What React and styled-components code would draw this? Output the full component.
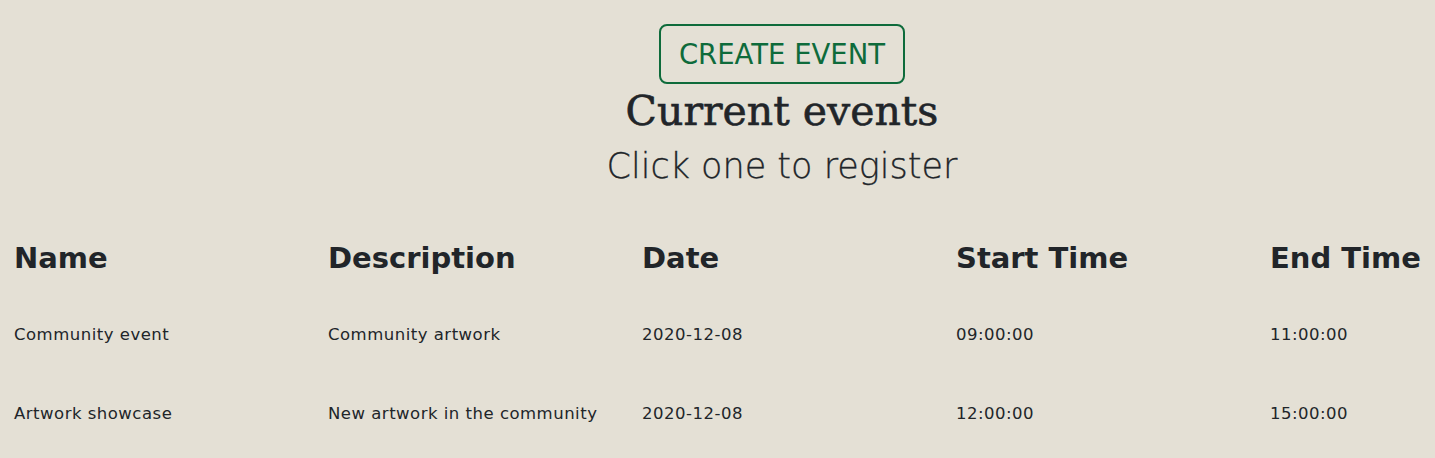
import React from 'react'
import styled, { createGlobalStyle } from 'styled-components'

const GlobalStyle = createGlobalStyle`
  html, body {
    margin: 0;
    padding: 0;
    background-color: #e4e0d5;
  }
  body {
    font-family: "DejaVu Sans", "Open Sans", sans-serif;
    color: #212529;
  }
`;

const Page = styled.div`
  width: 1564px;
  background-color: #e4e0d5;
  padding-bottom: 20px;
`;

const Header = styled.div`
  display: flex;
  flex-direction: column;
  align-items: center;
  padding-top: 24px;
`;

const CreateButton = styled.button`
  height: 60px;
  padding: 0 18px;
  background: transparent;
  border: 2px solid #0e6b3b;
  border-radius: 8px;
  color: #0e6b3b;
  font-family: "DejaVu Sans", sans-serif;
  font-size: 27.5px;
  font-weight: 400;
  cursor: pointer;
`;

const Title = styled.h1`
  margin: 0;
  font-family: "DejaVu Serif", "Liberation Serif", serif;
  font-weight: 400;
  font-size: 41px;
  line-height: 54px;
  color: #212529;
  -webkit-text-stroke: 0.6px #212529;
`;

const Subtitle = styled.h2`
  margin: 0;
  padding-top: 3px;
  font-weight: 300;
  font-size: 35px;
  line-height: 50px;
  color: #212529;
  -webkit-text-stroke: 0.3px #212529;
`;

const Table = styled.div`
  display: grid;
  grid-template-columns: repeat(5, 314px);
  padding-left: 14px;
  margin-top: 47px;
`;

const HeadCell = styled.div`
  font-weight: 700;
  font-size: 29px;
  line-height: 40px;
  padding-bottom: 20px;
  white-space: nowrap;
`;

const Cell = styled.div`
  font-size: 16.5px;
  font-weight: 400;
  letter-spacing: 0.5px;
  line-height: 20px;
  padding: 27px 0 32px;
  white-space: nowrap;
`;

const columns = ['Name', 'Description', 'Date', 'Start Time', 'End Time']

const events = [
  ['Community event', 'Community artwork', '2020-12-08', '09:00:00', '11:00:00'],
  ['Artwork showcase', 'New artwork in the community', '2020-12-08', '12:00:00', '15:00:00'],
]

function App() {
  return (
    <Page>
      <GlobalStyle />
      <Header>
        <CreateButton>CREATE EVENT</CreateButton>
        <Title>Current events</Title>
        <Subtitle>Click one to register</Subtitle>
      </Header>
      <Table>
        {columns.map(c => <HeadCell key={c}>{c}</HeadCell>)}
        {events.map((row, i) =>
          row.map((v, j) => <Cell key={i + '-' + j}>{v}</Cell>)
        )}
      </Table>
    </Page>
  );
}

export default App;
